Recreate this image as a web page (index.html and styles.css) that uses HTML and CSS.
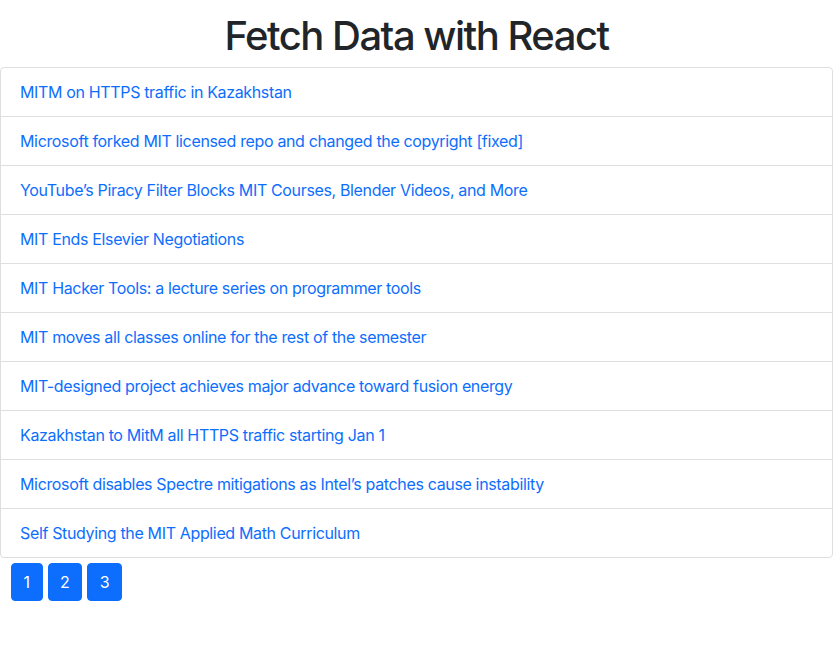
FILE: index.html
```html
<!DOCTYPE html>
<html>
<head>
<meta charset="utf-8">
<link rel="stylesheet" href="styles.css">
</head>
<body>
<div class="app">
  <h1 class="title">Fetch Data with React</h1>
  <ul class="list">
    <li class="item"><a href="#">MITM on HTTPS traffic in Kazakhstan</a></li>
    <li class="item"><a href="#">Microsoft forked MIT licensed repo and changed the copyright [fixed]</a></li>
    <li class="item"><a href="#">YouTube’s Piracy Filter Blocks MIT Courses, Blender Videos, and More</a></li>
    <li class="item"><a href="#">MIT Ends Elsevier Negotiations</a></li>
    <li class="item"><a href="#">MIT Hacker Tools: a lecture series on programmer tools</a></li>
    <li class="item"><a href="#">MIT moves all classes online for the rest of the semester</a></li>
    <li class="item"><a href="#">MIT-designed project achieves major advance toward fusion energy</a></li>
    <li class="item"><a href="#">Kazakhstan to MitM all HTTPS traffic starting Jan 1</a></li>
    <li class="item"><a href="#">Microsoft disables Spectre mitigations as Intel’s patches cause instability</a></li>
    <li class="item"><a href="#">Self Studying the MIT Applied Math Curriculum</a></li>
  </ul>
  <div class="pager">
    <button class="page-btn">1</button>
    <button class="page-btn">2</button>
    <button class="page-btn">3</button>
  </div>
</div>
</body>
</html>
```

FILE: styles.css
```css
html, body {
  margin: 0;
  padding: 0;
  background: #fff;
}
body {
  font-family: Inter, "Liberation Sans", sans-serif;
  font-size: 16px;
  line-height: 1.5;
  color: #212529;
}
.title {
  margin: 0;
  padding: 12px 0 7px;
  text-align: center;
  font-size: 40px;
  font-weight: 500;
  line-height: 48px;
  color: #212529;
  letter-spacing: -1.5px;
}
.list {
  list-style: none;
  margin: 0;
  padding: 0;
  border: 1px solid #dfdfdf;
  border-radius: 4px;
}
.item {
  padding: 12px 19px;
  line-height: 24px;
  border-top: 1px solid #dfdfdf;
  letter-spacing: -0.35px;
}
.item:first-child {
  border-top: none;
}
.item a {
  color: #0d6efd;
  text-decoration: none;
}
.pager {
  display: flex;
  gap: 5px;
  padding: 5px 0 0 11px;
}
.page-btn {
  font-family: inherit;
  font-size: 16px;
  line-height: 24px;
  padding: 6px 11.5px;
  border: 1px solid #0d6efd;
  border-radius: 4px;
  background: #0d6efd;
  color: #fff;
  cursor: pointer;
}
```
